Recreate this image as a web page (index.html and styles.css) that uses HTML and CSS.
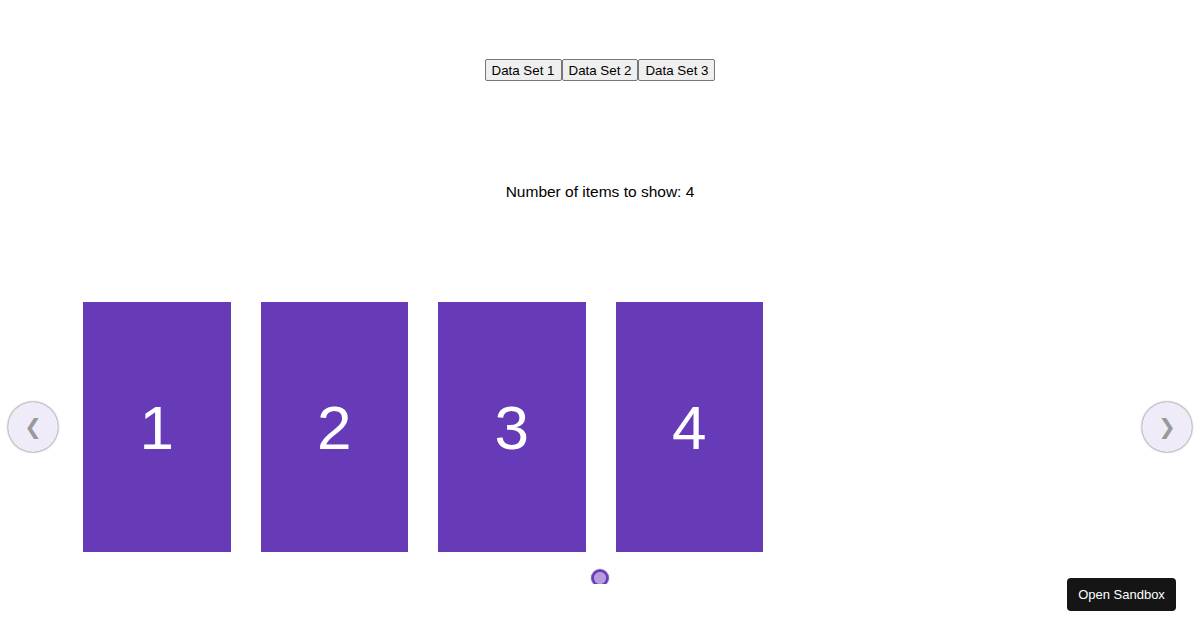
FILE: index.html
```html
<!DOCTYPE html>
<html lang="en">
<head>
    <meta charset="UTF-8">
    <meta name="viewport" content="width=device-width, initial-scale=1.0">
    <title>Carousel</title>
    <link rel="stylesheet" href="styles.css">
</head>
<body>

    <div class="controls">
        <button>Data Set 1</button><button>Data Set 2</button><button>Data Set 3</button>
    </div>

    <div class="count">Number of items to show: 4</div>

    <div class="carousel">
        <button class="arrow" disabled>&#10094;</button>
        <div class="slider">
            <div class="item">1</div>
            <div class="item">2</div>
            <div class="item">3</div>
            <div class="item">4</div>
        </div>
        <button class="arrow" disabled>&#10095;</button>
    </div>

    <div class="dots">
        <span class="dot active"></span>
    </div>

    <a class="sandbox">Open Sandbox</a>

</body>
</html>
```

FILE: styles.css
```css
body {
    margin: 0;
    font-family: "Liberation Sans", Arial, sans-serif;
}

.controls {
    padding-top: 59px;
    text-align: center;
    font-size: 0;
}

.controls button {
    font-family: "Liberation Sans", Arial, sans-serif;
    font-size: 13.33px;
    height: 22px;
    padding: 1px 6px;
    border: 1px solid #767676;
    border-radius: 2px;
    background: #efefef;
    color: #000;
    vertical-align: top;
}

.count {
    margin-top: 102px;
    text-align: center;
    font-size: 15.5px;
    line-height: 18px;
}

.carousel {
    display: flex;
    align-items: center;
    margin-top: 101px;
}

.arrow {
    box-sizing: border-box;
    width: 50px;
    height: 50px;
    min-width: 50px;
    margin: 0 8px;
    padding: 0;
    border: none;
    border-radius: 50%;
    background-color: rgba(103, 58, 183, 0.1);
    box-shadow: 0 0 2px 0 #333;
    color: #999;
    font-size: 21px;
    line-height: 50px;
    font-family: "DejaVu Sans", sans-serif;
}

.slider {
    flex: 1;
    display: flex;
    margin: 0 2px;
}

.item {
    width: 147.5px;
    height: 250px;
    margin: 0 15px;
    background: #673ab7;
    color: #fff;
    font-size: 62px;
    display: flex;
    align-items: center;
    justify-content: center;
}

.dots {
    display: flex;
    justify-content: center;
    margin-top: 20px;
}

.dot {
    width: 12px;
    height: 12px;
    border-radius: 50%;
    box-shadow: 0 0 1px 3px rgba(103, 58, 183, 1);
}

.dot.active {
    background-color: rgba(103, 58, 183, 0.5);
}

.sandbox {
    position: fixed;
    right: 24px;
    bottom: 19px;
    width: 109px;
    height: 33px;
    box-sizing: border-box;
    background: #151515;
    color: #fff;
    border-radius: 4px;
    font-size: 13px;
    display: flex;
    align-items: center;
    justify-content: center;
}
```
